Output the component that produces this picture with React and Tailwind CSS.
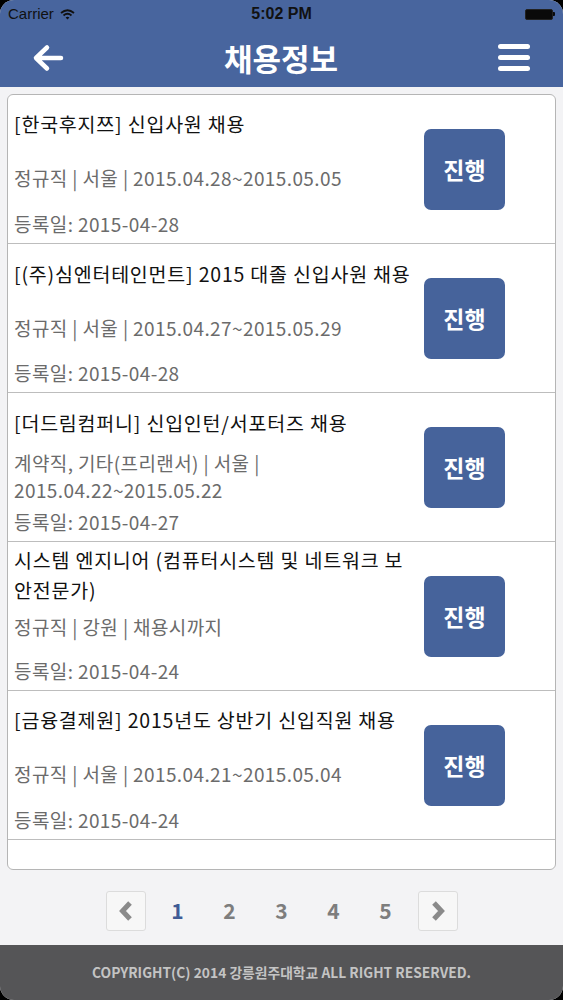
const BLUE = '#48659e';
const FONT = { fontFamily: '"Noto Sans CJK KR", "Noto Sans", sans-serif' };

const jobs = [
  {
    title: ['[한국후지쯔] 신입사원 채용'],
    sub: ['정규직 | 서울 | 2015.04.28~2015.05.05'],
    date: '2015-04-28',
    pt: 'pt-[14px]',
    mt: 'mt-[25px]',
  },
  {
    title: ['[(주)심엔터테인먼트] 2015 대졸 신입사원 채용'],
    sub: ['정규직 | 서울 | 2015.04.27~2015.05.29'],
    date: '2015-04-28',
    pt: 'pt-[15px]',
    mt: 'mt-[25px]',
  },
  {
    title: ['[더드림컴퍼니] 신입인턴/서포터즈 채용'],
    sub: ['계약직, 기타(프리랜서) | 서울 |', '2015.04.22~2015.05.22'],
    date: '2015-04-27',
    pt: 'pt-[15px]',
    mt: 'mt-[11px]',
  },
  {
    title: ['시스템 엔지니어 (컴퓨터시스템 및 네트워크 보', '안전문가)'],
    sub: ['정규직 | 강원 | 채용시까지'],
    date: '2015-04-24',
    pt: 'pt-[3px]',
    mt: 'mt-[8px]',
  },
  {
    title: ['[금융결제원] 2015년도 상반기 신입직원 채용'],
    sub: ['정규직 | 서울 | 2015.04.21~2015.05.04'],
    date: '2015-04-24',
    pt: 'pt-[14px]',
    mt: 'mt-[25px]',
  },
];

function StatusBar() {
  return (
    <div className="h-[28px] flex items-center justify-between px-[8px] text-[#111]">
      <div className="flex items-center gap-[6px] w-[120px]">
        <span className="text-[15px]" style={{ fontFamily: '"Liberation Sans", sans-serif' }}>Carrier</span>
        <svg width="15" height="11" viewBox="0 0 15 11">
          <path d="M1 4 Q7.5 -1.5 14 4" stroke="#111" strokeWidth="1.8" fill="none" />
          <path d="M3.5 6.5 Q7.5 3 11.5 6.5" stroke="#111" strokeWidth="1.8" fill="none" />
          <path d="M7.5 10.5 L5.6 8.4 Q7.5 7 9.4 8.4 Z" fill="#111" />
        </svg>
      </div>
      <span className="text-[16px] font-semibold" style={{ fontFamily: '"Liberation Sans", sans-serif' }}>5:02 PM</span>
      <div className="w-[120px] flex justify-end">
        <div className="flex items-center">
          <div className="w-[28px] h-[11px] bg-[#0a0a0a] rounded-[2px] border border-[#222]" />
          <div className="w-[2px] h-[4px] bg-[#0a0a0a] rounded-r-[1px]" />
        </div>
      </div>
    </div>
  );
}

function NavBar() {
  return (
    <div className="h-[59px] flex items-center justify-between pl-[32px] pr-[33px]">
      <svg width="32" height="28" viewBox="0 0 32 28">
        <path d="M29 14 H5 M15 3.5 L4 14 L15 24.5" stroke="#fff" strokeWidth="4.5" fill="none" strokeLinecap="round" strokeLinejoin="round" />
      </svg>
      <h1 className="text-[31px] font-bold text-white leading-none" style={FONT}>채용정보</h1>
      <div className="flex flex-col gap-[6px] w-[32px]">
        <div className="h-[5px] rounded-full bg-white" />
        <div className="h-[5px] rounded-full bg-white" />
        <div className="h-[5px] rounded-full bg-white" />
      </div>
    </div>
  );
}

function JobRow({ job }) {
  return (
    <div className="h-[149px] flex items-center border-b border-[#bdbdbd]">
      <div className={`w-[416px] h-full flex flex-col pl-[6px] pb-[6px] ${job.pt}`}>
        <div className="text-[19.5px] tracking-[0.8px] leading-[30px] text-[#111]">
          {job.title.map((t) => (
            <div key={t} className="whitespace-nowrap">{t}</div>
          ))}
        </div>
        <div className={`text-[19px] tracking-[0.4px] leading-[27px] text-[#6b6b6b] ${job.mt}`}>
          {job.sub.map((t) => (
            <div key={t} className="whitespace-nowrap">{t}</div>
          ))}
        </div>
        <div className="mt-auto text-[19px] tracking-[0.4px] leading-[27px] text-[#6b6b6b] whitespace-nowrap">
          등록일: {job.date}
        </div>
      </div>
      <button className="w-[81px] h-[81px] rounded-[7px] bg-[#46639b] text-white text-[23px] font-bold">
        진행
      </button>
    </div>
  );
}

function Chevron({ d }) {
  return (
    <div className="w-[40px] h-[40px] rounded-[3px] border border-[#dcdcdc] bg-[#f7f7f7] flex items-center justify-center">
      <svg width="18" height="22" viewBox="0 0 18 22">
        <path d={d} stroke="#8a8a8a" strokeWidth="5" fill="none" strokeLinejoin="miter" />
      </svg>
    </div>
  );
}

function Pagination() {
  return (
    <div className="flex justify-center mt-[21px] h-[40px]">
      <div className="w-[52px] flex justify-center">
        <Chevron d="M13 3 L5.5 11 L13 19" />
      </div>
      {[1, 2, 3, 4, 5].map((n) => (
        <div
          key={n}
          className={`w-[52px] flex items-center justify-center text-[21px] font-semibold ${n === 1 ? 'text-[#3f5b95]' : 'text-[#7d7d7d]'}`}
        >
          {n}
        </div>
      ))}
      <div className="w-[52px] flex justify-center">
        <Chevron d="M5 3 L12.5 11 L5 19" />
      </div>
    </div>
  );
}

export default function App() {
  return (
    <div className="w-[563px] h-[1000px] bg-black" style={FONT}>
      <div className="w-full h-full rounded-[14px] overflow-hidden bg-[#f3f3f5] flex flex-col">
        <div style={{ background: BLUE }}>
          <StatusBar />
          <NavBar />
        </div>

        <div className="mx-[7px] mt-[7px] h-[776px] rounded-[6px] border border-[#b5b5b5] bg-white">
          {jobs.map((job, i) => (
            <JobRow key={i} job={job} />
          ))}
        </div>

        <Pagination />

        <div className="mt-auto h-[55px] bg-[#555557] flex items-center justify-center">
          <span className="text-[13.8px] font-semibold text-[#c4c4c4]">
            COPYRIGHT(C) 2014 강릉원주대학교 ALL RIGHT RESERVED.
          </span>
        </div>
      </div>
    </div>
  );
}
